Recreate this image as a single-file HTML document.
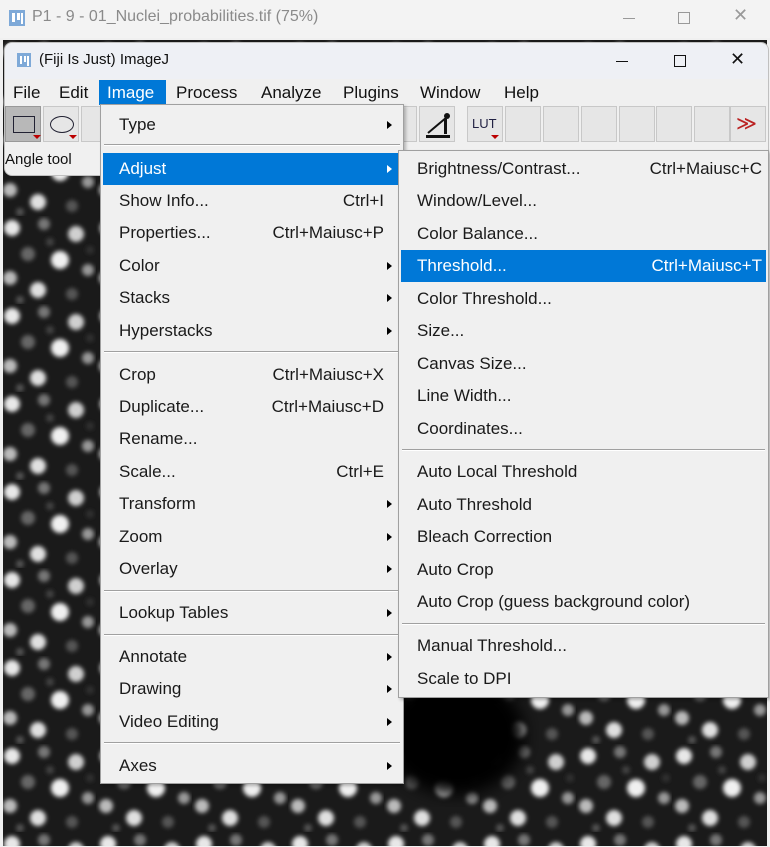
<!DOCTYPE html>
<html><head><meta charset="utf-8"><style>
*{margin:0;padding:0;box-sizing:border-box}
body{width:770px;height:847px;overflow:hidden;background:#fff;font-family:"Liberation Sans",sans-serif;position:relative}
.abs{position:absolute}
.menu{position:absolute;background:#f0f0f0;border:1px solid #a0a0a0;box-shadow:2px 2px 3px rgba(0,0,0,.25)}
.it{position:absolute;left:0;right:0;height:32px;font-size:17px;color:#1a1a1a;line-height:32px}
.it .l{position:absolute}
.it .r{position:absolute}
.it .a{position:absolute;width:0;height:0;border-top:4px solid transparent;border-bottom:4px solid transparent;border-left:5px solid #000;top:12px}
.hl{background:#0078d7;color:#fff}
.hl .a{border-left-color:#fff}
.sep{position:absolute;height:2px;border-top:1px solid #a0a0a0;border-bottom:1px solid #fff}
.btn{position:absolute;top:106px;width:36px;height:36px;background:#e6e6e6;border:1px solid #c8c8c8}
</style></head><body>
<div class="abs" style="left:0;top:0;width:770px;height:38px;background:#f3f3f3"></div>
<svg class="abs" style="left:8px;top:9px" width="18" height="18"><rect x="1" y="1" width="16" height="16" fill="#7ea9d8"/><rect x="4" y="4" width="3" height="9" fill="#fff"/><rect x="9" y="4" width="3" height="7" fill="#fff"/><rect x="13" y="4" width="2" height="11" fill="#fff"/></svg>
<div class="abs" style="left:32px;top:8px;font-size:16px;color:#8a8a8a">P1 - 9 - 01_Nuclei_probabilities.tif (75%)</div>
<div class="abs" style="left:623px;top:18px;width:12px;height:1px;background:#999"></div>
<div class="abs" style="left:678px;top:12px;width:12px;height:12px;border:1px solid #999"></div>
<div class="abs" style="left:733px;top:5px;font-size:18px;color:#999">✕</div>
<div class="abs" style="left:0;top:38px;width:770px;height:10px;background:#f0f0f0;font-size:13px;color:#222;overflow:hidden;line-height:16px">578.14x497.80 μm (823x848); 8-bit; 682K</div>
<svg class="abs" style="left:0;top:40px" width="770" height="807">
<defs>
<filter id="b"><feGaussianBlur stdDeviation="2.2"/></filter>
<pattern id="p" width="96" height="88" patternUnits="userSpaceOnUse">
<rect width="96" height="88" fill="#1a1a1a"/>
<g filter="url(#b)">
<circle cx="12" cy="12" r="8" fill="#e8e8e8"/><circle cx="44" cy="8" r="6" fill="#777"/><circle cx="76" cy="18" r="8" fill="#d0d0d0"/>
<circle cx="28" cy="38" r="7" fill="#666"/><circle cx="60" cy="44" r="9" fill="#f0f0f0"/><circle cx="88" cy="54" r="6" fill="#999"/>
<circle cx="10" cy="62" r="7" fill="#bbb"/><circle cx="38" cy="74" r="8" fill="#e0e0e0"/><circle cx="72" cy="78" r="6" fill="#555"/>
<circle cx="50" cy="26" r="4" fill="#444"/><circle cx="20" cy="84" r="4" fill="#555"/><circle cx="90" cy="34" r="4" fill="#333"/></g>
</pattern>
<filter id="b2"><feGaussianBlur stdDeviation="8"/></filter>
</defs>
<rect x="0" y="0" width="770" height="807" fill="#f0f0f0"/>
<rect x="3" y="0" width="764" height="806" fill="url(#p)"/>
<ellipse cx="455" cy="695" rx="70" ry="60" fill="#000" filter="url(#b2)"/>
</svg>
<div class="abs" style="left:4px;top:42px;width:765px;height:134px;background:#f0f0f0;border:1px solid #c0c0c0;border-radius:8px"></div>
<div class="abs" style="left:5px;top:43px;width:763px;height:36px;background:#eef0f5;border-radius:8px 8px 0 0"></div>
<svg class="abs" style="left:16px;top:52px" width="16" height="16"><rect x="1" y="1" width="14" height="14" fill="#7ea9d8"/><rect x="4" y="4" width="2" height="8" fill="#fff"/><rect x="8" y="4" width="2" height="6" fill="#fff"/><rect x="11" y="4" width="2" height="10" fill="#fff"/></svg>
<div class="abs" style="left:39px;top:51px;font-size:15px;color:#111">(Fiji Is Just) ImageJ</div>
<div class="abs" style="left:616px;top:61px;width:12px;height:1px;background:#111"></div>
<div class="abs" style="left:674px;top:55px;width:12px;height:12px;border:1px solid #111"></div>
<div class="abs" style="left:730px;top:49px;font-size:18px;color:#111">✕</div>
<div class="abs" style="left:5px;top:80px;width:763px;height:25px;font-size:17px;color:#111;line-height:25px">
<span class="abs" style="left:8px">File</span><span class="abs" style="left:54px">Edit</span>
<span class="abs" style="left:94px;width:67px;height:25px;background:#0078d7;color:#fff;padding-left:8px">Image</span>
<span class="abs" style="left:171px">Process</span><span class="abs" style="left:256px">Analyze</span><span class="abs" style="left:338px">Plugins</span><span class="abs" style="left:415px">Window</span><span class="abs" style="left:499px">Help</span></div>
<div class="btn" style="left:5px;background:#b8b8b8;border-color:#999"><div class="abs" style="left:7px;top:9px;width:22px;height:17px;border:1.5px solid #223"></div><div class="abs" style="left:27px;top:28px;border-left:4px solid transparent;border-right:4px solid transparent;border-top:4px solid #b00"></div></div>
<div class="btn" style="left:43px"><div class="abs" style="left:6px;top:9px;width:24px;height:17px;border:1.5px solid #223;border-radius:50%"></div><div class="abs" style="left:25px;top:28px;border-left:4px solid transparent;border-right:4px solid transparent;border-top:4px solid #b00"></div></div>
<div class="btn" style="left:81px"></div>
<div class="btn" style="left:381px;width:36px"></div>
<div class="btn" style="left:419px"><svg width="36" height="36"><path d="M6 28 L30 28 L30 31 L6 31Z" fill="#111"/><path d="M8 26 L27 10" stroke="#111" stroke-width="2"/><rect x="24" y="12" width="3" height="15" fill="#111"/><circle cx="27" cy="9" r="3" fill="#111"/></svg></div>
<div class="btn" style="left:467px"><div class="abs" style="left:4px;top:9px;font-size:13px;color:#224">LUT</div><div class="abs" style="left:23px;top:28px;border-left:4px solid transparent;border-right:4px solid transparent;border-top:4px solid #b00"></div></div>
<div class="btn" style="left:505px"></div><div class="btn" style="left:543px"></div><div class="btn" style="left:581px"></div><div class="btn" style="left:619px"></div><div class="btn" style="left:656px"></div><div class="btn" style="left:694px"></div>
<div class="btn" style="left:730px"><div class="abs" style="left:5px;top:4px;font-size:20px;color:#b22">≫</div></div>
<div class="abs" style="left:5px;top:151px;font-size:15px;color:#111">Angle tool</div>
<div class="menu" style="left:100px;top:104px;width:304px;height:680px">
<div class="it" style="top:4px"><span class="l" style="left:18px">Type</span><span class="a" style="left:286px"></span></div>
<div class="sep" style="left:3px;right:3px;top:39px"></div>
<div class="it hl" style="top:48px;left:2px;right:0"><span class="l" style="left:16px">Adjust</span><span class="a" style="left:284px"></span></div>
<div class="it" style="top:80px"><span class="l" style="left:18px">Show Info...</span><span class="r" style="right:19px">Ctrl+I</span></div>
<div class="it" style="top:112px"><span class="l" style="left:18px">Properties...</span><span class="r" style="right:19px">Ctrl+Maiusc+P</span></div>
<div class="it" style="top:145px"><span class="l" style="left:18px">Color</span><span class="a" style="left:286px"></span></div>
<div class="it" style="top:177px"><span class="l" style="left:18px">Stacks</span><span class="a" style="left:286px"></span></div>
<div class="it" style="top:210px"><span class="l" style="left:18px">Hyperstacks</span><span class="a" style="left:286px"></span></div>
<div class="sep" style="left:3px;right:3px;top:246px"></div>
<div class="it" style="top:254px"><span class="l" style="left:18px">Crop</span><span class="r" style="right:19px">Ctrl+Maiusc+X</span></div>
<div class="it" style="top:286px"><span class="l" style="left:18px">Duplicate...</span><span class="r" style="right:19px">Ctrl+Maiusc+D</span></div>
<div class="it" style="top:318px"><span class="l" style="left:18px">Rename...</span></div>
<div class="it" style="top:351px"><span class="l" style="left:18px">Scale...</span><span class="r" style="right:19px">Ctrl+E</span></div>
<div class="it" style="top:383px"><span class="l" style="left:18px">Transform</span><span class="a" style="left:286px"></span></div>
<div class="it" style="top:416px"><span class="l" style="left:18px">Zoom</span><span class="a" style="left:286px"></span></div>
<div class="it" style="top:448px"><span class="l" style="left:18px">Overlay</span><span class="a" style="left:286px"></span></div>
<div class="sep" style="left:3px;right:3px;top:485px"></div>
<div class="it" style="top:492px"><span class="l" style="left:18px">Lookup Tables</span><span class="a" style="left:286px"></span></div>
<div class="sep" style="left:3px;right:3px;top:529px"></div>
<div class="it" style="top:536px"><span class="l" style="left:18px">Annotate</span><span class="a" style="left:286px"></span></div>
<div class="it" style="top:568px"><span class="l" style="left:18px">Drawing</span><span class="a" style="left:286px"></span></div>
<div class="it" style="top:601px"><span class="l" style="left:18px">Video Editing</span><span class="a" style="left:286px"></span></div>
<div class="sep" style="left:3px;right:3px;top:637px"></div>
<div class="it" style="top:645px"><span class="l" style="left:18px">Axes</span><span class="a" style="left:286px"></span></div>
</div>
<div class="menu" style="left:398px;top:150px;width:371px;height:548px">
<div class="it" style="top:2px"><span class="l" style="left:18px">Brightness/Contrast...</span><span class="r" style="right:6px">Ctrl+Maiusc+C</span></div>
<div class="it" style="top:34px"><span class="l" style="left:18px">Window/Level...</span></div>
<div class="it" style="top:67px"><span class="l" style="left:18px">Color Balance...</span></div>
<div class="it hl" style="top:99px;left:2px;right:2px"><span class="l" style="left:16px">Threshold...</span><span class="r" style="right:4px">Ctrl+Maiusc+T</span></div>
<div class="it" style="top:132px"><span class="l" style="left:18px">Color Threshold...</span></div>
<div class="it" style="top:164px"><span class="l" style="left:18px">Size...</span></div>
<div class="it" style="top:197px"><span class="l" style="left:18px">Canvas Size...</span></div>
<div class="it" style="top:229px"><span class="l" style="left:18px">Line Width...</span></div>
<div class="it" style="top:262px"><span class="l" style="left:18px">Coordinates...</span></div>
<div class="sep" style="left:3px;right:3px;top:298px"></div>
<div class="it" style="top:305px"><span class="l" style="left:18px">Auto Local Threshold</span></div>
<div class="it" style="top:338px"><span class="l" style="left:18px">Auto Threshold</span></div>
<div class="it" style="top:370px"><span class="l" style="left:18px">Bleach Correction</span></div>
<div class="it" style="top:403px"><span class="l" style="left:18px">Auto Crop</span></div>
<div class="it" style="top:435px"><span class="l" style="left:18px">Auto Crop (guess background color)</span></div>
<div class="sep" style="left:3px;right:3px;top:472px"></div>
<div class="it" style="top:479px"><span class="l" style="left:18px">Manual Threshold...</span></div>
<div class="it" style="top:512px"><span class="l" style="left:18px">Scale to DPI</span></div>
</div>
</body></html>
